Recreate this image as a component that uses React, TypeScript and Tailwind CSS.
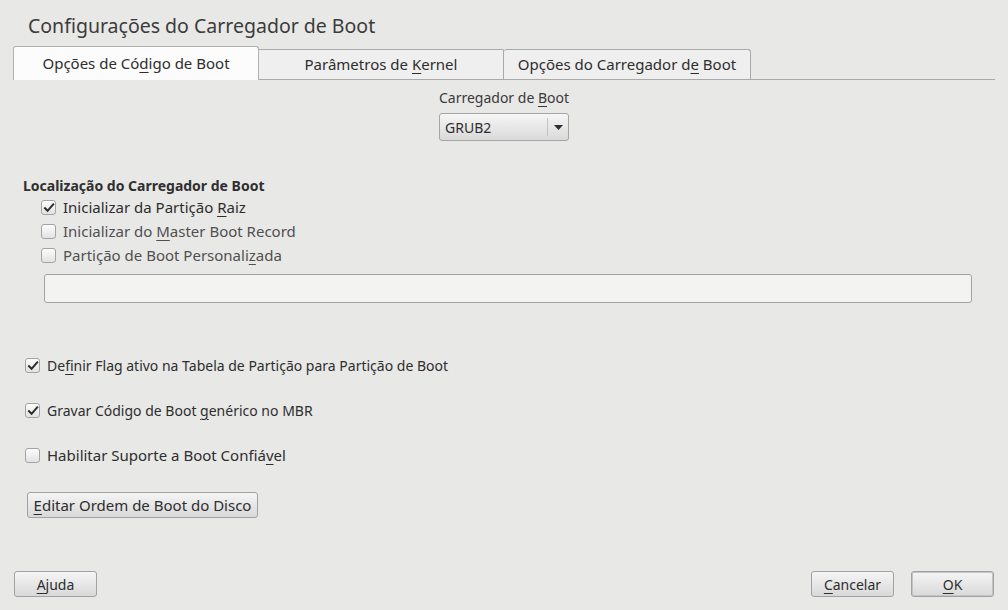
import React from "react";

const U = ({ c }: { c: string }) => <span className="underline underline-offset-[3px] decoration-1">{c}</span>;

function Check({ checked }: { checked: boolean }) {
  return (
    <span className="relative inline-block w-[15px] h-[15px] rounded-[3px] border border-[#a3a3a3] bg-gradient-to-b from-[#fdfdfd] to-[#e2e2e2] shrink-0">
      {checked && (
        <svg className="absolute left-[1px] top-[1px]" width="12" height="12" viewBox="0 0 12 12">
          <path d="M2 6.2 L4.6 8.8 L10.2 2.4" fill="none" stroke="#2b2b2b" strokeWidth="2" strokeLinecap="square" />
        </svg>
      )}
    </span>
  );
}

function Btn({ children, className = "" }: { children: React.ReactNode; className?: string }) {
  return (
    <div className={"h-[26px] flex items-center justify-center rounded-[3px] border border-[#a2a2a2] bg-gradient-to-b from-[#f5f5f5] to-[#d9d9d9] text-[14px] text-[#2e2e2e] " + className}>
      {children}
    </div>
  );
}

export default function App() {
  return (
    <div className="w-[1008px] h-[610px] bg-[#e8e8e7] flex flex-col text-[#2e2e2e] overflow-hidden" style={{ fontFamily: '"Noto Sans", "DejaVu Sans", sans-serif' }}>
      <div className="h-[47px] pl-[28px] pt-[12px] text-[19.5px] leading-[28px] text-[#3b3b3b]">Configurações do Carregador de Boot</div>
      <div className="ml-[13px] w-[982px] h-[33px] flex items-end border-b border-[#a9a9a9] text-[15px]">
        <div className="w-[246px] h-[34px] -mb-px bg-[#fcfcfc] border border-b-0 border-[#b1b1b1] rounded-t-[3px] flex items-center justify-center pb-[1px]">
          <span>Opções de Có<U c="d" />igo de Boot</span>
        </div>
        <div className="w-[245px] h-[30px] bg-[#efefef] border-t border-r border-[#a9a9a9] rounded-tr-[2px] flex items-center justify-center">
          <span>Parâmetros de <U c="K" />ernel</span>
        </div>
        <div className="w-[247px] h-[30px] bg-[#efefef] border-t border-r border-[#a9a9a9] rounded-t-[3px] flex items-center justify-center">
          <span>Opções do Carregador d<U c="e" /> Boot</span>
        </div>
      </div>

      <div className="mt-[8px] h-[20px] leading-[20px] text-[14px] text-center text-[#3a3a3a]">
        Carregador de <U c="B" />oot
      </div>
      <div className="mt-[5px] ml-[439px] w-[130px] h-[28px] rounded-[3px] border border-[#a5a5a5] bg-gradient-to-b from-[#f6f6f6] to-[#dadada] flex items-center text-[14px]">
        <span className="pl-[5px] flex-1">GRUB2</span>
        <span className="w-px h-[18px] bg-[#c2c2c2]" />
        <span className="w-[20px] flex justify-center">
          <svg width="9" height="5" viewBox="0 0 9 5"><path d="M0 0 H9 L4.5 5 Z" fill="#2e2e2e" /></svg>
        </span>
      </div>

      <div className="mt-[35px] ml-[23px] h-[20px] leading-[20px] text-[14px] font-bold text-[#2f2f2f]">Localização do Carregador de Boot</div>
      <div className="ml-[41px] h-[23px] flex items-center gap-[7px] text-[15px]">
        <Check checked /> <span>Inicializar da Partição <U c="R" />aiz</span>
      </div>
      <div className="ml-[41px] h-[24px] flex items-center gap-[7px] text-[15px] text-[#505050]">
        <Check checked={false} /> <span>Inicializar do <U c="M" />aster Boot Record</span>
      </div>
      <div className="ml-[41px] h-[25px] flex items-center gap-[7px] text-[15px] text-[#505050]">
        <Check checked={false} /> <span>Partição de Boot Personali<U c="z" />ada</span>
      </div>
      <div className="mt-[6px] ml-[44px] w-[928px] h-[29px] rounded-[3px] border border-[#a3a3a3] bg-[#f3f3f2]" />

      <div className="mt-[50px] ml-[25px] h-[24px] flex items-center gap-[7px] text-[14px]">
        <Check checked /> <span>De<U c="f" />inir Flag ativo na Tabela de Partição para Partição de Boot</span>
      </div>
      <div className="mt-[21px] ml-[25px] h-[24px] flex items-center gap-[7px] text-[14px]">
        <Check checked /> <span>Gravar Código de Boot <U c="g" />enérico no MBR</span>
      </div>
      <div className="mt-[21px] ml-[25px] h-[24px] flex items-center gap-[7px] text-[15px]">
        <Check checked={false} /> <span>Habilitar Suporte a Boot Confiá<U c="v" />el</span>
      </div>
      <div className="mt-[25px] ml-[27px]">
        <Btn className="w-[231px] text-[15px]"><span><U c="E" />ditar Ordem de Boot do Disco</span></Btn>
      </div>

      <div className="mt-auto mb-[13px] px-[14px] flex items-center">
        <Btn className="w-[83px]"><span><U c="A" />juda</span></Btn>
        <div className="flex-1" />
        <Btn className="w-[83px]"><span><U c="C" />ancelar</span></Btn>
        <Btn className="w-[83px] ml-[17px] border-[#8e8e8e] shadow-[inset_0_0_0_1px_#c4c4c4]"><span><U c="O" />K</span></Btn>
      </div>
    </div>
  );
}
